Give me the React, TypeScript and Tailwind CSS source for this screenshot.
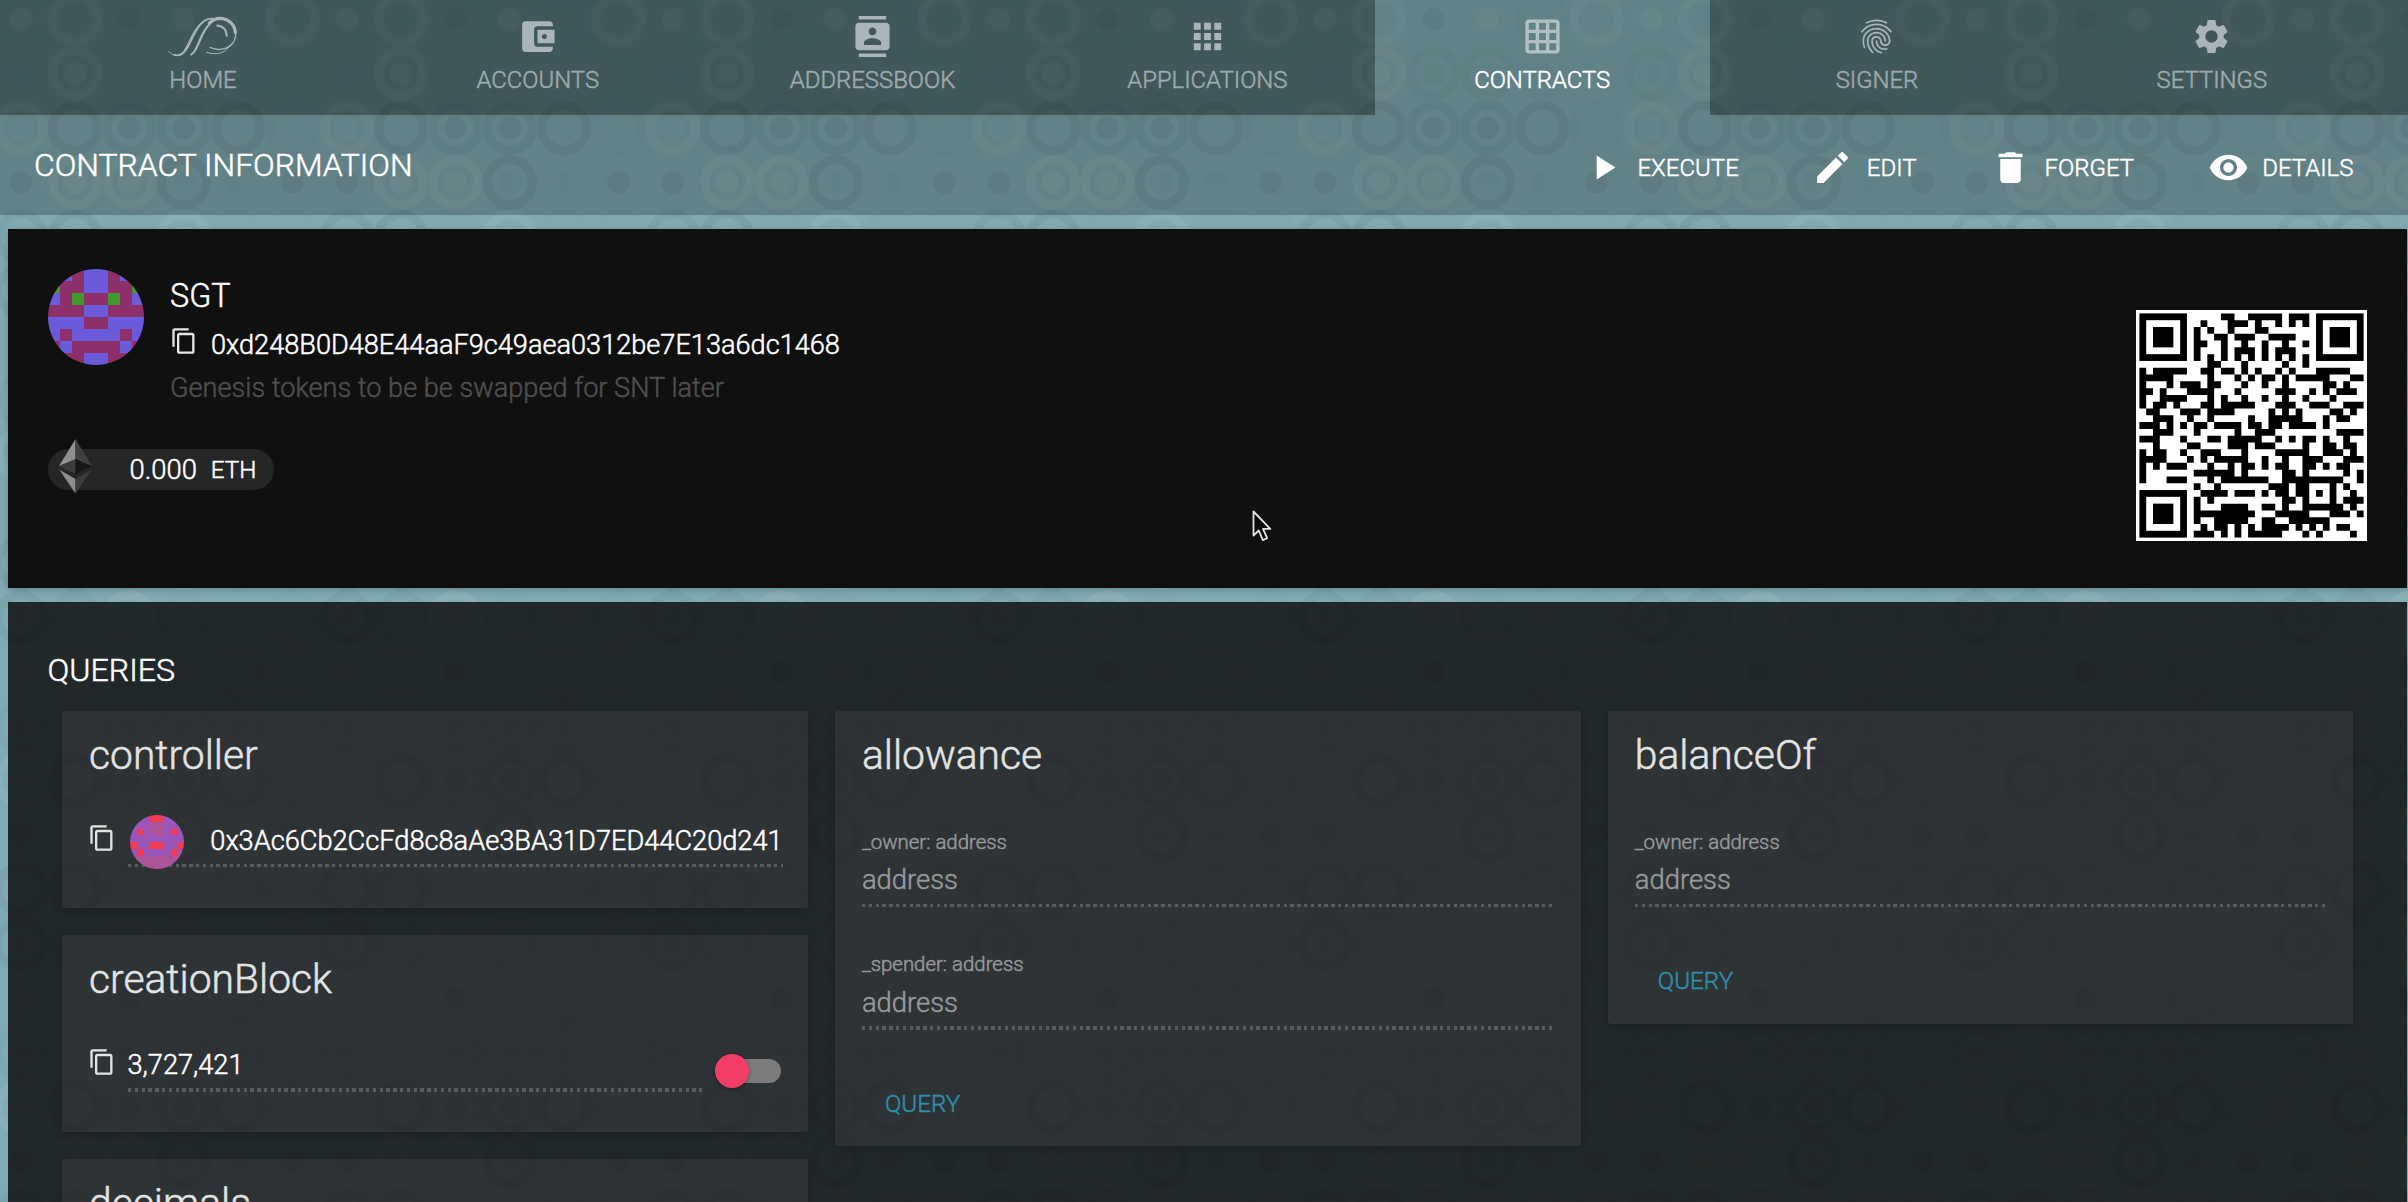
import type { ReactNode } from "react";
import type { IconType } from "react-icons";
import {
  MdAccountBalanceWallet,
  MdApps,
  MdContacts,
  MdContentCopy,
  MdDelete,
  MdEdit,
  MdFingerprint,
  MdGridOn,
  MdPlayArrow,
  MdSettings,
  MdVisibility,
} from "react-icons/md";

/* ---------- background pattern: a 6x6 tile of concentric circles ---------- */

// Each cell is [ring, core]; positive values are light, negative ones dark.
const TILE: [number, number][][] = [
  [[0, 0.08], [0.09, 0], [0, -0.06], [0, 0.1], [-0.01, 0], [0.1, 0]],
  [[-0.03, -0.02], [0.1, 0.09], [-0.03, -0.03], [-0.03, -0.01], [-0.01, -0.02], [0, 0]],
  [[0.1, 0.06], [-0.07, 0], [-0.04, -0.07], [-0.06, -0.07], [-0.07, 0], [-0.02, 0]],
  [[0, -0.08], [0.11, 0.11], [0.11, 0.1], [-0.07, -0.01], [0, -0.02], [0, -0.08]],
  [[-0.06, 0], [-0.07, 0.04], [-0.02, 0], [0.08, 0.06], [-0.01, 0], [-0.02, 0]],
  [[-0.06, -0.03], [-0.04, 0], [0.12, 0.06], [-0.01, 0], [0, 0.09], [-0.02, 0]],
];

const tone = (v: number) => (v > 0 ? "#ddd" : "#222");

function Backdrop() {
  return (
    <svg className="absolute inset-0 h-full w-full" aria-hidden="true">
      <defs>
        <pattern id="circles" x="-6.4" y="-8" width="326" height="326.4" patternUnits="userSpaceOnUse">
          {TILE.map((row, r) =>
            row.map(([ring, core], c) => (
              <g key={`${r}-${c}`} transform={`translate(${27.2 + c * 54.33} ${27.2 + r * 54.4})`}>
                {ring !== 0 && (
                  <circle r="22.6" fill="none" stroke={tone(ring)} strokeWidth="9" opacity={Math.abs(ring)} />
                )}
                {core !== 0 && <circle r="11.3" fill={tone(core)} opacity={Math.abs(core)} />}
              </g>
            )),
          )}
        </pattern>
      </defs>
      <rect width="100%" height="100%" fill="url(#circles)" />
    </svg>
  );
}

/* ---------- small drawings ---------- */

function PixelAvatar({ rows, colors, className }: { rows: string[]; colors: Record<string, string>; className: string }) {
  return (
    <svg viewBox="0 0 8 8" className={`overflow-hidden rounded-full ${className}`} shapeRendering="crispEdges">
      {rows.map((row, y) =>
        [...row].map((k, x) => <rect key={`${x}-${y}`} x={x} y={y} width="1" height="1" fill={colors[k]} />),
      )}
    </svg>
  );
}

const SGT_FACE = ["MBMBBMBM", "GMMBBMMG", "BMGMMGMB", "MMMBBMMM", "BBBMMBBB", "BMBBBBMB", "MBMMMMBM", "BMMBBMMB"];
const CONTROLLER_FACE = ["PPPRRPPP", "PPPMMPPP", "PRPMMPRP", "PPPPPPPP", "RPPRRPPR", "PRPPPPRP", "MMMMMMMM", "MMMMMMMM"];

function EthLogo() {
  return (
    <svg viewBox="0 0 33 55" className="h-[55px] w-[33px]">
      <path d="M16.5 0 0 27 16.5 20.5z" fill="#8f9190" />
      <path d="M16.5 0 33 27 16.5 20.5z" fill="#3f403f" />
      <path d="M16.5 20 .2 27.3 16.5 35z" fill="#3a3b3b" />
      <path d="M16.5 20 33 27.3 16.5 35z" fill="#161616" />
      <path d="M.4 30.8 16.5 54.5V40z" fill="#8b8d8c" />
      <path d="M32.4 30.8 16.5 54.5V40z" fill="#3c3d3d" />
    </svg>
  );
}

function ParityLogo({ className }: { className?: string }) {
  return (
    <svg viewBox="50 30 218 130" className={className} fill="none" stroke="currentColor" strokeLinecap="round">
      <path d="M55 141c12 11 27 15 39 8" strokeWidth="2.5" />
      <path d="M72 151c18 5 32-7 43-28 12-24 22-48 36-64 11-13 24-19 36-18" strokeWidth="5.5" />
      <path d="M102 137c12-17 20-40 31-59 11-17 26-32 42-36" strokeWidth="3" />
      <path d="M123 150c10-5 17-19 25-38 8-20 17-42 33-57" strokeWidth="5.5" />
      <path d="M133 139c10-18 16-40 28-59 12-21 28-39 51-40 27-1 45 20 46 44 1 25-14 43-35 48-14 4-30 2-43-4" strokeWidth="4" />
      <path d="M178 55c10-10 21-15 33-15 26 1 44 19 46 43" strokeWidth="10" />
      <path d="M202 62c18 2 28 14 29 31" strokeWidth="6" />
      <path d="M170 143c28 9 56 4 70-20" strokeWidth="3" />
    </svg>
  );
}

// Dark modules of the address code, one entry per row; the three finder squares are added on top.
const QR_ROWS = [
  "12-13 16-20 22-24",
  "9 13-15 17 20 22 24",
  "8 10 13 17-18",
  "8 11-12 14-16 19-22",
  "8-9 12 15 18 21 24",
  "8 12 14-16 18 20-22",
  "8 10 12 14 16 18 20 22 24",
  "10-11 15 21 24",
  "0 2-6 9-10 12-13 15 17 20 22 26-30",
  "0-4 10 14 16 18-19 21 23-27 31-32",
  "0 4 6-8 10-11 15 18 21 27-28 30",
  "0-1 3 7-10 14 20-22 25 27 29-31",
  "0 3-6 10 12 15 18 21 24 28",
  "0 2-3 5 9-10 12-16 20-22 25-27 30-32",
  "1-2 6-8 10-13 19 21 23 28-29 31",
  "2-4 7 10 16 19-23 27 29-30",
  "0-2 4 6 8-9 11-14 16-17 19-20 22-25 27",
  "2-4 8 14 17-19 29-32",
  "0-2 6 10-11 13-17 20 22 24-25 27 30",
  "2 7-8 13-15 17-19 24 27-28 30-31",
  "0 2-3 6 9-11 15 20-24 27-29 31",
  "0-3 7 9 11-15 18 21 24-26 30-32",
  "0 2 4-6 10 13 15-16 18 20-21 24-25 27 29-30",
  "0 8-13 15 21-22 24 30 32",
  "0 4-6 10 12-18 21-29 32",
  "8 11 19-21 23-24 28 30",
  "9-12 14-16 18 20-21 23-24 26 28 31",
  "8 10 21-22 24 28 30-32",
  "8 12-15 18-19 21 24-29 31",
  "8-16 20-24 28-30 32",
  "8 11-15 18-19 22-27",
  "9 11-12 14 16 18-21 23 25 27 29-30",
  "8-10 12 14 16-20 24 26 31",
];

const QR_PATH = QR_ROWS.map((row, y) =>
  row
    .split(" ")
    .map((run) => {
      const [a, b = a] = run.split("-").map(Number);
      return `M${a} ${y}h${b - a + 1}v1H${a}z`;
    })
    .join(""),
).join("");

function QrCode() {
  return (
    <svg viewBox="-0.5 -0.5 34 34" className="h-[231px] w-[231px] bg-white">
      <path d={QR_PATH} fill="#000" />
      {[[0, 0], [26, 0], [0, 26]].map(([x, y]) => (
        <g key={`${x}-${y}`} transform={`translate(${x} ${y})`}>
          <rect x=".5" y=".5" width="6" height="6" fill="#fff" stroke="#000" />
          <rect x="2" y="2" width="3" height="3" fill="#000" />
        </g>
      ))}
    </svg>
  );
}

function Pointer() {
  return (
    <svg viewBox="0 0 20 32" className="absolute left-[1252px] top-[510px] h-8 w-5">
      <path
        d="M1.5 1.5v24l5.3-5 4 9.6 4.3-1.9-4-9.3h7.2z"
        fill="#0b0b0b"
        stroke="#e4e4e4"
        strokeWidth="1.8"
        strokeLinejoin="round"
      />
    </svg>
  );
}

/* ---------- navigation ---------- */

const TABS: { label: string; icon: IconType | null; active?: boolean }[] = [
  { label: "HOME", icon: null },
  { label: "ACCOUNTS", icon: MdAccountBalanceWallet },
  { label: "ADDRESSBOOK", icon: MdContacts },
  { label: "APPLICATIONS", icon: MdApps },
  { label: "CONTRACTS", icon: MdGridOn, active: true },
  { label: "SIGNER", icon: MdFingerprint },
  { label: "SETTINGS", icon: MdSettings },
];

function NavBar() {
  return (
    <nav className="flex h-[115px]">
      <div className="w-[35.6px] bg-black/32" />
      {TABS.map(({ label, icon: Icon, active }) => (
        <div
          key={label}
          className={`flex w-[334.8px] flex-col items-center pt-4 ${active ? "text-white" : "bg-black/32 text-[#9eaaad]"}`}
        >
          <div className={`flex h-[41px] items-center ${active ? "text-[#b0c0c3]" : "text-[#a9b5b8]"}`}>
            {Icon ? <Icon className="h-[41px] w-[41px]" /> : <ParityLogo className="h-[43px] w-[72px]" />}
          </div>
          <span className="mt-[10.5px] text-[23.9px] leading-6">{label}</span>
        </div>
      ))}
      <div className="flex-1 bg-black/32" />
    </nav>
  );
}

function Action({ icon: Icon, label }: { icon: IconType; label: string }) {
  return (
    <button className="flex items-center gap-[13.6px]">
      <Icon className="h-[41px] w-[41px]" />
      <span className="text-[24px] leading-6">{label}</span>
    </button>
  );
}

function TitleBar() {
  return (
    <div className="flex h-[100px] items-start justify-between pl-[34px] pr-[54.5px]">
      <h1 className="pt-[34px] text-[31.9px] leading-8">CONTRACT INFORMATION</h1>
      <div className="flex gap-[73.4px] pt-8">
        <Action icon={MdPlayArrow} label="EXECUTE" />
        <Action icon={MdEdit} label="EDIT" />
        <Action icon={MdDelete} label="FORGET" />
        <Action icon={MdVisibility} label="DETAILS" />
      </div>
    </div>
  );
}

/* ---------- contract summary ---------- */

function Summary() {
  return (
    <section className="mr-px flex h-[359px] shrink-0 justify-between bg-[#101010] px-10 shadow-[0_2px_8px_rgba(0,0,0,0.2)]">
      <div>
        <div className="flex pt-10">
          <PixelAvatar
            rows={SGT_FACE}
            colors={{ B: "#6b5bdb", M: "#8d306c", G: "#41992e" }}
            className="h-24 w-24"
          />
          <div className="ml-[26px] pt-[6.6px]">
            <h2 className="text-[32.3px] leading-10">SGT</h2>
            <div className="mt-[12.6px] flex items-start gap-[13px] text-[27.15px] leading-[34px]">
              <MdContentCopy className="-mt-px h-7 w-7 text-[#e6e6e6]" />
              <span>0xd248B0D48E44aaF9c49aea0312be7E13a6dc1468</span>
            </div>
            <p className="mt-[9px] text-[27.15px] leading-[34px] text-[#4e4e4e]">
              Genesis tokens to be be swapped for SNT later
            </p>
          </div>
        </div>
        <div className="relative mt-11 flex h-[41px] w-[226px] items-center rounded-full bg-[#262626] pl-[81.5px]">
          <div className="absolute -top-[10px] left-[10.5px]">
            <EthLogo />
          </div>
          <span className="pt-0.5 text-[27.4px] leading-[41px]">0.000</span>
          <span className="ml-3.5 pt-0.5 text-[24.2px] leading-[41px]">ETH</span>
        </div>
      </div>
      <div className="pt-[81px]">
        <QrCode />
      </div>
    </section>
  );
}

/* ---------- queries ---------- */

function Dots() {
  return (
    <div className="h-[3.4px] bg-[repeating-linear-gradient(90deg,#585b5c_0_3.4px,transparent_3.4px_6.8px)]" />
  );
}

function Card({ title, children, className = "" }: { title: string; children?: ReactNode; className?: string }) {
  return (
    <article
      className={`rounded-[3px] bg-[#fff5fa]/6 px-[27px] pt-5 shadow-[0_2px_8px_rgba(0,0,0,0.2)] ${className}`}
    >
      <h3 className="text-[40.8px] leading-[48px] text-[#e2e3e3]">{title}</h3>
      {children}
    </article>
  );
}

function ResultRow({ children, avatar, toggle }: { children: ReactNode; avatar?: ReactNode; toggle?: boolean }) {
  return (
    <div className="mt-[45px] flex items-start">
      <MdContentCopy className="-ml-[1.5px] h-7 w-7 shrink-0 text-[#e2e4e4]" />
      <div className="relative ml-3 flex-1">
        {avatar && <div className="absolute -top-[9px] left-[2.2px]">{avatar}</div>}
        <div className={`pb-[6px] text-[27.2px] leading-[34px] ${avatar ? "pl-[82.8px]" : ""}`}>{children}</div>
        <Dots />
      </div>
      {toggle && (
        <div className="relative ml-[18px] mt-[11px] h-6 w-[61px] rounded-full bg-[#7c7c7c]">
          <div className="absolute -left-[5px] -top-[5px] h-[34px] w-[34px] rounded-full bg-[#f33d67] shadow-[0_1px_4px_rgba(0,0,0,0.4)]" />
        </div>
      )}
    </div>
  );
}

function AddressField({ label, className }: { label: string; className: string }) {
  return (
    <div className={`text-[#96999a] ${className}`}>
      <div className="text-[20.4px] leading-6">{label}</div>
      <div className="mt-[9.4px] pb-[6.7px] text-[27.4px] leading-[34px]">address</div>
      <Dots />
    </div>
  );
}

function QueryButton() {
  return <button className="ml-[23px] mt-[62px] block text-[24.2px] leading-6 text-[#2d8ea8]">QUERY</button>;
}

function Queries() {
  return (
    <section className="mr-px min-h-0 flex-1 bg-[#111111]/85">
      <h2 className="pl-[39.5px] pt-12 text-[32.2px] leading-10">QUERIES</h2>
      <div className="mt-[21px] grid grid-cols-3 items-start gap-[27.2px] pl-[54px] pr-[53.5px]">
        <div className="flex flex-col gap-[27.2px]">
          <Card title="controller" className="h-[197px]">
            <ResultRow
              avatar={
                <PixelAvatar
                  rows={CONTROLLER_FACE}
                  colors={{ P: "#9a55b8", M: "#ad5498", R: "#f23b52" }}
                  className="h-[54.4px] w-[54.4px]"
                />
              }
            >
              0x3Ac6Cb2CcFd8c8aAe3BA31D7ED44C20d241
            </ResultRow>
          </Card>
          <Card title="creationBlock" className="h-[197px]">
            <ResultRow toggle>3,727,421</ResultRow>
          </Card>
          <Card title="decimals" className="h-[197px]" />
        </div>
        <Card title="allowance" className="h-[435px]">
          <AddressField label="_owner: address" className="mt-[51px]" />
          <AddressField label="_spender: address" className="mt-[44.8px]" />
          <QueryButton />
        </Card>
        <Card title="balanceOf" className="h-[312.6px]">
          <AddressField label="_owner: address" className="mt-[51px]" />
          <QueryButton />
        </Card>
      </div>
    </section>
  );
}

export default function App() {
  return (
    <div className="relative h-[1202px] overflow-hidden bg-[#80abb2] font-['Roboto',sans-serif] font-light text-white [-webkit-text-stroke:0.5px]">
      <Backdrop />
      <div className="relative flex h-full flex-col">
        <header className="bg-black/24">
          <NavBar />
          <TitleBar />
        </header>
        <main className="mt-3.5 flex min-h-0 flex-1 flex-col gap-3.5 pl-2">
          <Summary />
          <Queries />
        </main>
      </div>
      <Pointer />
    </div>
  );
}
